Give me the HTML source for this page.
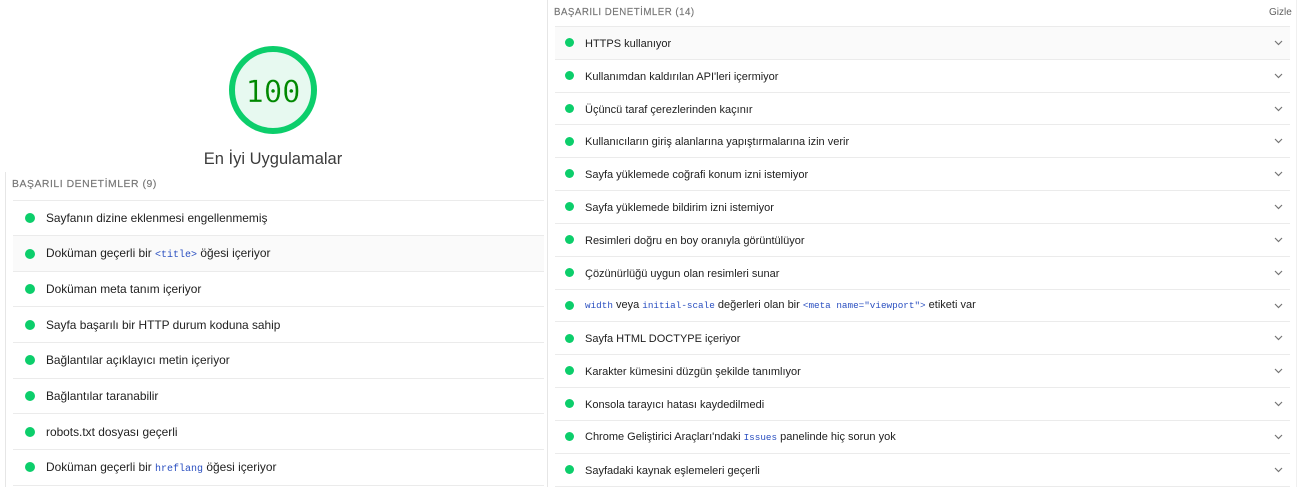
<!DOCTYPE html>
<html><head><meta charset="utf-8"><style>
html,body{margin:0;padding:0;background:#fff}
body{width:1300px;height:487px;position:relative;overflow:hidden;font-family:"Liberation Sans",Arial,sans-serif;color:#212121}
.a{position:absolute}
.t{position:absolute;white-space:nowrap;line-height:16px;font-size:11px}
.l .t{font-size:11.9px}
.d{position:absolute;border-radius:50%;background:#0cce6b}
.s{position:absolute;height:1px;background:#ebebeb}
code{font-family:"Liberation Mono",monospace;color:#2a4fc0;font-size:10px}
.h{position:absolute;font-size:10.4px;color:#757575;letter-spacing:.55px;white-space:nowrap;line-height:14px;-webkit-text-stroke:.15px #757575}
svg.c{position:absolute;width:10px;height:6px}
</style></head><body>
<div class="a" style="left:5px;top:172px;width:1px;height:315px;background:#e6e6e6"></div>
<div class="a" style="left:547px;top:0;width:1px;height:487px;background:#e6e6e6"></div>
<div class="a" style="left:1296px;top:0;width:1px;height:487px;background:#f0f0f0"></div>

<svg class="a" style="left:228px;top:45px" width="90" height="90" viewBox="0 0 90 90"><circle cx="45" cy="45" r="41" fill="#e7f9f0" stroke="#0cce6b" stroke-width="6"/><text x="45" y="57" text-anchor="middle" font-family="DejaVu Sans Mono, Liberation Mono, monospace" font-size="30.5" fill="#008800" stroke="#e7f9f0" stroke-width=".35">100</text></svg>
<div class="a" style="left:173px;top:149px;width:200px;text-align:center;font-size:16.5px;line-height:20px;color:#3c3c3c;white-space:nowrap">En İyi Uygulamalar</div>

<div class="h" style="left:12px;top:178px">BAŞARILI DENETİMLER (9)</div>
<div class="a" style="left:13px;top:236px;width:531px;height:35px;background:#fafafa"></div>
<div class="l">
<div class="s" style="left:13px;top:200px;width:531px"></div>
<div class="s" style="left:13px;top:235px;width:531px"></div>
<div class="s" style="left:13px;top:271px;width:531px"></div>
<div class="s" style="left:13px;top:306px;width:531px"></div>
<div class="s" style="left:13px;top:342px;width:531px"></div>
<div class="s" style="left:13px;top:378px;width:531px"></div>
<div class="s" style="left:13px;top:413px;width:531px"></div>
<div class="s" style="left:13px;top:449px;width:531px"></div>
<div class="s" style="left:13px;top:485px;width:531px"></div>
<div class="d" style="left:25px;top:213px;width:10px;height:10px"></div><div class="t" style="left:46px;top:210px">Sayfanın dizine eklenmesi engellenmemiş</div>
<div class="d" style="left:25px;top:249px;width:10px;height:10px"></div><div class="t" style="left:46px;top:245px">Doküman geçerli bir <code>&lt;title&gt;</code> öğesi içeriyor</div>
<div class="d" style="left:25px;top:284px;width:10px;height:10px"></div><div class="t" style="left:46px;top:281px">Doküman meta tanım içeriyor</div>
<div class="d" style="left:25px;top:320px;width:10px;height:10px"></div><div class="t" style="left:46px;top:317px">Sayfa başarılı bir HTTP durum koduna sahip</div>
<div class="d" style="left:25px;top:355px;width:10px;height:10px"></div><div class="t" style="left:46px;top:352px">Bağlantılar açıklayıcı metin içeriyor</div>
<div class="d" style="left:25px;top:391px;width:10px;height:10px"></div><div class="t" style="left:46px;top:388px">Bağlantılar taranabilir</div>
<div class="d" style="left:25px;top:427px;width:10px;height:10px"></div><div class="t" style="left:46px;top:424px">robots.txt dosyası geçerli</div>
<div class="d" style="left:25px;top:462px;width:10px;height:10px"></div><div class="t" style="left:46px;top:459px">Doküman geçerli bir <code>hreflang</code> öğesi içeriyor</div>
</div>

<div class="h" style="left:554px;top:6px;font-size:9.7px;letter-spacing:.5px">BAŞARILI DENETİMLER (14)</div>
<div class="a" style="left:1269px;top:6px;font-size:10px;line-height:14px;color:#616161">Gizle</div>
<div class="a" style="left:555px;top:27px;width:735px;height:32px;background:#fafafa"></div>
<div class="r">
<div class="s" style="left:555px;top:26px;width:735px"></div>
<div class="s" style="left:555px;top:59px;width:735px"></div>
<div class="s" style="left:555px;top:92px;width:735px"></div>
<div class="s" style="left:555px;top:124px;width:735px"></div>
<div class="s" style="left:555px;top:157px;width:735px"></div>
<div class="s" style="left:555px;top:190px;width:735px"></div>
<div class="s" style="left:555px;top:223px;width:735px"></div>
<div class="s" style="left:555px;top:256px;width:735px"></div>
<div class="s" style="left:555px;top:289px;width:735px"></div>
<div class="s" style="left:555px;top:321px;width:735px"></div>
<div class="s" style="left:555px;top:354px;width:735px"></div>
<div class="s" style="left:555px;top:387px;width:735px"></div>
<div class="s" style="left:555px;top:420px;width:735px"></div>
<div class="s" style="left:555px;top:453px;width:735px"></div>
<div class="s" style="left:555px;top:486px;width:735px"></div>

<div class="d" style="left:565px;top:38px;width:9px;height:9px"></div><div class="t" style="left:585px;top:36px">HTTPS kullanıyor</div>
<div class="d" style="left:565px;top:71px;width:9px;height:9px"></div><div class="t" style="left:585px;top:69px">Kullanımdan kaldırılan API'leri içermiyor</div>
<div class="d" style="left:565px;top:104px;width:9px;height:9px"></div><div class="t" style="left:585px;top:102px">Üçüncü taraf çerezlerinden kaçınır</div>
<div class="d" style="left:565px;top:137px;width:9px;height:9px"></div><div class="t" style="left:585px;top:134px">Kullanıcıların giriş alanlarına yapıştırmalarına izin verir</div>
<div class="d" style="left:565px;top:169px;width:9px;height:9px"></div><div class="t" style="left:585px;top:167px">Sayfa yüklemede coğrafi konum izni istemiyor</div>
<div class="d" style="left:565px;top:202px;width:9px;height:9px"></div><div class="t" style="left:585px;top:200px">Sayfa yüklemede bildirim izni istemiyor</div>
<div class="d" style="left:565px;top:235px;width:9px;height:9px"></div><div class="t" style="left:585px;top:233px">Resimleri doğru en boy oranıyla görüntülüyor</div>
<div class="d" style="left:565px;top:268px;width:9px;height:9px"></div><div class="t" style="left:585px;top:266px">Çözünürlüğü uygun olan resimleri sunar</div>
<div class="d" style="left:565px;top:301px;width:9px;height:9px"></div><div class="t" style="left:585px;top:297px"><code style="font-size:9.3px">width</code> veya <code style="font-size:9.3px">initial-scale</code> değerleri olan bir <code style="font-size:9.3px">&lt;meta name="viewport"&gt;</code> etiketi var</div>
<div class="d" style="left:565px;top:334px;width:9px;height:9px"></div><div class="t" style="left:585px;top:331px">Sayfa HTML DOCTYPE içeriyor</div>
<div class="d" style="left:565px;top:366px;width:9px;height:9px"></div><div class="t" style="left:585px;top:364px">Karakter kümesini düzgün şekilde tanımlıyor</div>
<div class="d" style="left:565px;top:399px;width:9px;height:9px"></div><div class="t" style="left:585px;top:397px">Konsola tarayıcı hatası kaydedilmedi</div>
<div class="d" style="left:565px;top:432px;width:9px;height:9px"></div><div class="t" style="left:585px;top:429px">Chrome Geliştirici Araçları'ndaki <code style="font-size:9.3px">Issues</code> panelinde hiç sorun yok</div>
<div class="d" style="left:565px;top:465px;width:9px;height:9px"></div><div class="t" style="left:585px;top:463px">Sayfadaki kaynak eşlemeleri geçerli</div>
</div>
<svg width="0" height="0" style="position:absolute"><defs><path id="ch" d="M1 1L4.5 4.5L8 1" fill="none" stroke="#757575" stroke-width="1.2"/></defs></svg>
<svg class="c" style="left:1274px;top:40px" viewBox="0 0 10 6"><use href="#ch"/></svg>
<svg class="c" style="left:1274px;top:73px" viewBox="0 0 10 6"><use href="#ch"/></svg>
<svg class="c" style="left:1274px;top:106px" viewBox="0 0 10 6"><use href="#ch"/></svg>
<svg class="c" style="left:1274px;top:138px" viewBox="0 0 10 6"><use href="#ch"/></svg>
<svg class="c" style="left:1274px;top:171px" viewBox="0 0 10 6"><use href="#ch"/></svg>
<svg class="c" style="left:1274px;top:204px" viewBox="0 0 10 6"><use href="#ch"/></svg>
<svg class="c" style="left:1274px;top:237px" viewBox="0 0 10 6"><use href="#ch"/></svg>
<svg class="c" style="left:1274px;top:270px" viewBox="0 0 10 6"><use href="#ch"/></svg>
<svg class="c" style="left:1274px;top:303px" viewBox="0 0 10 6"><use href="#ch"/></svg>
<svg class="c" style="left:1274px;top:335px" viewBox="0 0 10 6"><use href="#ch"/></svg>
<svg class="c" style="left:1274px;top:368px" viewBox="0 0 10 6"><use href="#ch"/></svg>
<svg class="c" style="left:1274px;top:401px" viewBox="0 0 10 6"><use href="#ch"/></svg>
<svg class="c" style="left:1274px;top:434px" viewBox="0 0 10 6"><use href="#ch"/></svg>
<svg class="c" style="left:1274px;top:467px" viewBox="0 0 10 6"><use href="#ch"/></svg>
</body></html>
